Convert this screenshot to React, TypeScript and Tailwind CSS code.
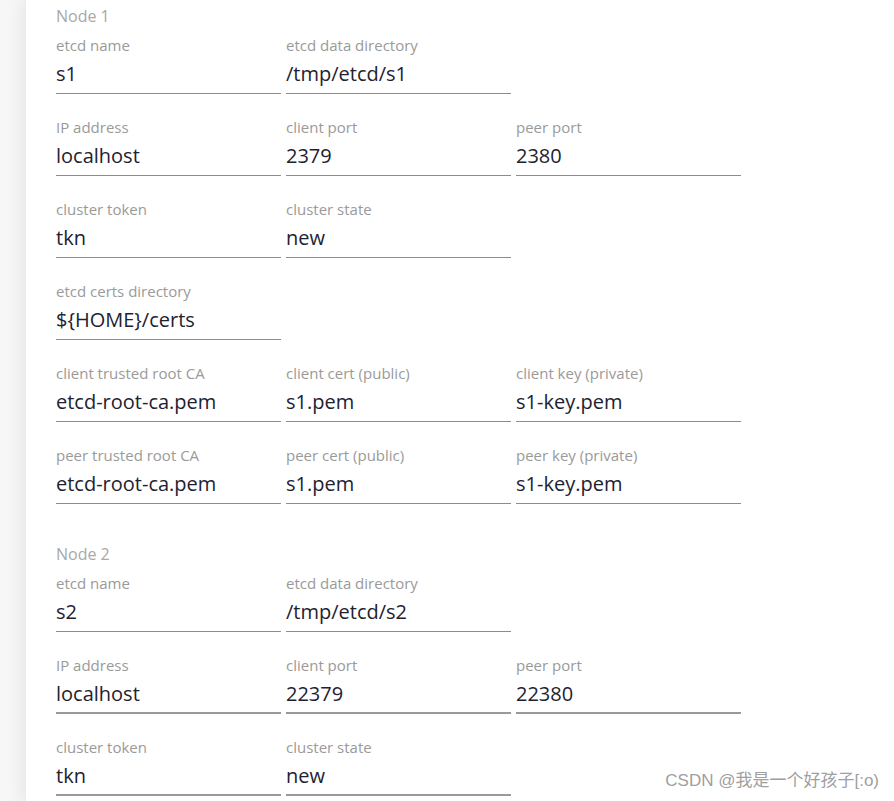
import React from "react";

type Field = { label: string; value: string };

const node1: Field[][] = [
  [
    { label: "etcd name", value: "s1" },
    { label: "etcd data directory", value: "/tmp/etcd/s1" },
  ],
  [
    { label: "IP address", value: "localhost" },
    { label: "client port", value: "2379" },
    { label: "peer port", value: "2380" },
  ],
  [
    { label: "cluster token", value: "tkn" },
    { label: "cluster state", value: "new" },
  ],
  [{ label: "etcd certs directory", value: "${HOME}/certs" }],
  [
    { label: "client trusted root CA", value: "etcd-root-ca.pem" },
    { label: "client cert (public)", value: "s1.pem" },
    { label: "client key (private)", value: "s1-key.pem" },
  ],
  [
    { label: "peer trusted root CA", value: "etcd-root-ca.pem" },
    { label: "peer cert (public)", value: "s1.pem" },
    { label: "peer key (private)", value: "s1-key.pem" },
  ],
];

const node2: Field[][] = [
  [
    { label: "etcd name", value: "s2" },
    { label: "etcd data directory", value: "/tmp/etcd/s2" },
  ],
  [
    { label: "IP address", value: "localhost" },
    { label: "client port", value: "22379" },
    { label: "peer port", value: "22380" },
  ],
  [
    { label: "cluster token", value: "tkn" },
    { label: "cluster state", value: "new" },
  ],
];

function TextField({ field, thick }: { field: Field; thick: boolean }) {
  return (
    <div className="w-[225px] flex flex-col">
      <div className="h-[20px] text-[15px] leading-[18px] text-[#9a9a9a]">{field.label}</div>
      <div
        className={`h-[38px] pt-[5px] text-[20px] leading-[26px] text-[#1e2230] ${
          thick ? "border-b-2 border-[#999999]" : "border-b border-[#8c8c8c]"
        }`}
      >
        {field.value}
      </div>
    </div>
  );
}

function NodeSection({ title, rows, thickFrom }: { title: string; rows: Field[][]; thickFrom: number }) {
  return (
    <section className="flex flex-col">
      <h3 className="h-[22px] text-[16px] leading-[22px] text-[#a8a8a8] mb-[9px]">{title}</h3>
      <div className="flex flex-col gap-[24px]">
        {rows.map((row, i) => (
          <div key={i} className="flex gap-[5px]">
            {row.map((f) => (
              <TextField key={f.label} field={f} thick={i >= thickFrom} />
            ))}
          </div>
        ))}
      </div>
    </section>
  );
}

export default function App() {
  return (
    <div
      className="relative w-[894px] h-[801px] overflow-hidden bg-[#f7f7f7]"
      style={{ fontFamily: '"Open Sans", "Noto Sans", sans-serif' }}
    >
      <div className="ml-[25px] h-full bg-white border-l border-[#ececec] shadow-[-6px_0_14px_rgba(0,0,0,0.06)] pl-[30px] pt-[5px]">
        <NodeSection title="Node 1" rows={node1} thickFrom={99} />
        <div className="mt-[39px]">
          <NodeSection title="Node 2" rows={node2} thickFrom={1} />
        </div>
      </div>
      <div
        className="absolute right-[15px] bottom-[10px] text-[17px] leading-[20px] text-[#a0a0a0]"
        style={{ fontFamily: '"Liberation Sans", "Noto Sans CJK SC", sans-serif' }}
      >
        CSDN @我是一个好孩子[:o)
      </div>
    </div>
  );
}
